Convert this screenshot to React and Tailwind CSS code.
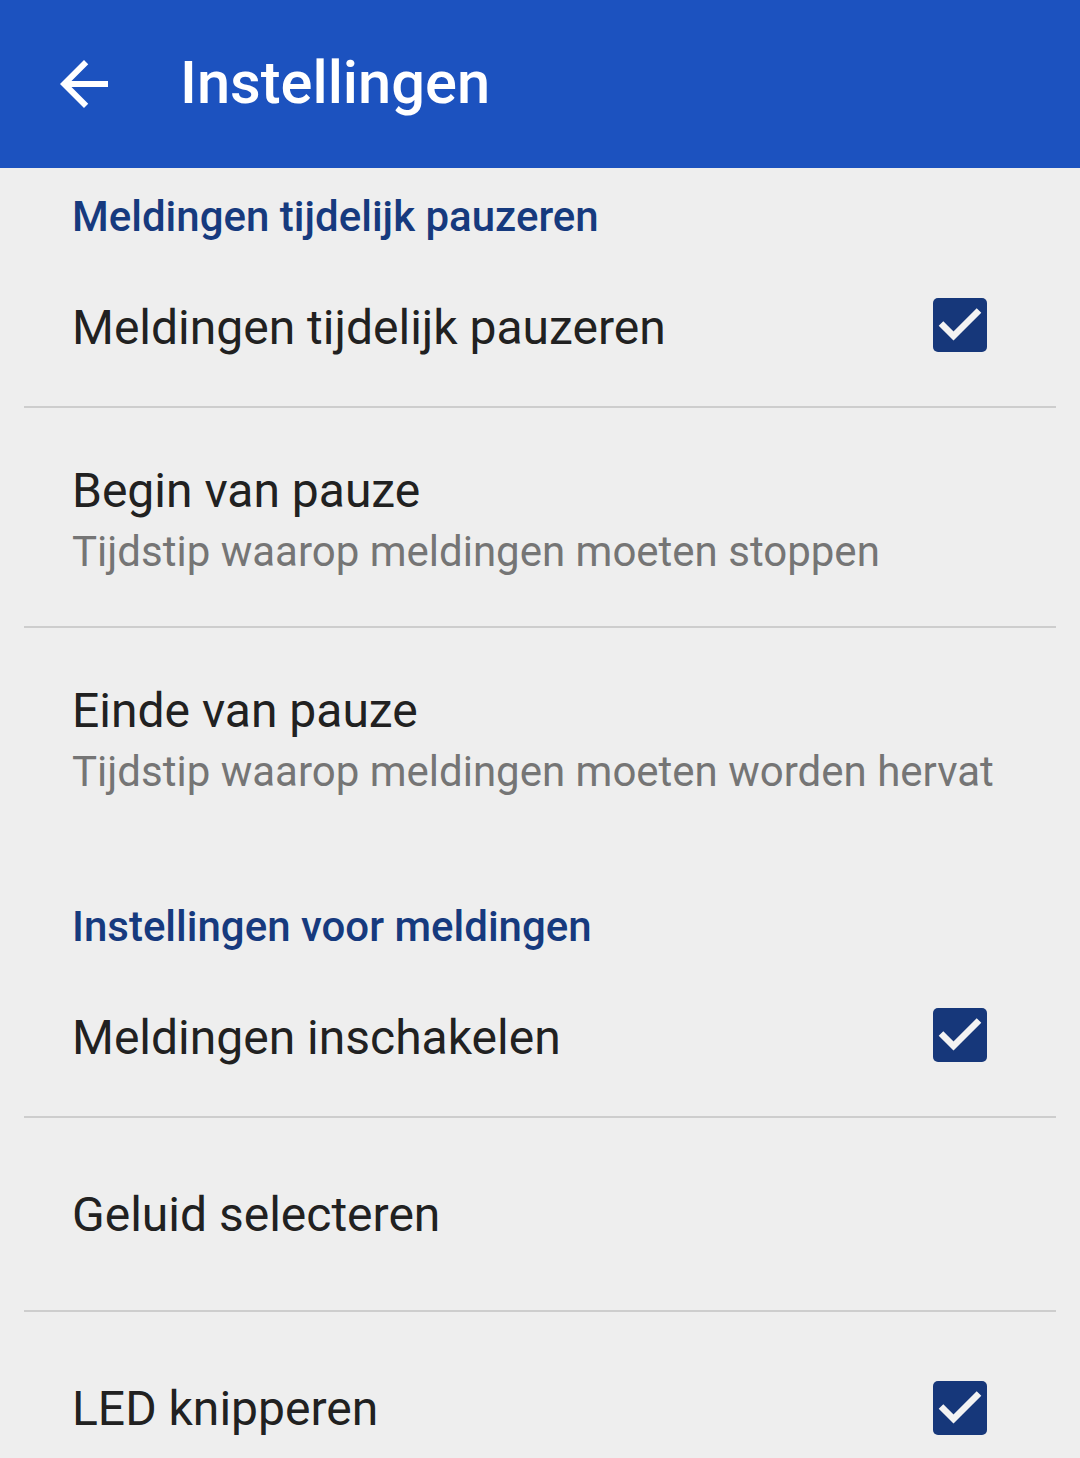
import React from "react";

function Check({ up }) {
  return (
    <div className={`w-[54px] h-[54px] rounded-[5px] bg-[#16377a] flex items-center justify-center shrink-0 ${up ? "mb-[4px]" : ""}`}>
      <svg width="54" height="54" viewBox="0 0 54 54">
        <path d="M8 25.5 L20.5 38 L46 12.5" fill="none" stroke="#f3f3f3" strokeWidth="6.5" strokeLinecap="butt" strokeLinejoin="miter" />
      </svg>
    </div>
  );
}

function Divider() {
  return <div className="mx-[24px] h-[2px] bg-[#cdcdcd]" />;
}

function Category({ children, extra }) {
  return (
    <div className={`${extra ? "h-[112px]" : "h-[80px]"} flex items-end pb-[6px] pl-[72px]`}>
      <span className="text-[42px] leading-[50px] font-medium text-[#163a7e] whitespace-nowrap">{children}</span>
    </div>
  );
}

function Row({ title, summary, checked, up, h }) {
  return (
    <div className={`${h} flex items-center pl-[72px] ${checked ? "pr-[93px]" : "pr-[24px]"}`}>
      <div className={`flex-1 flex flex-col ${summary ? "pt-[7px]" : ""}`}>
        <span className="text-[48px] leading-[61px] text-[#212121] whitespace-nowrap">{title}</span>
        {summary && <span className="text-[42px] leading-[61px] text-[#757575] whitespace-nowrap">{summary}</span>}
      </div>
      {checked && <Check up={up} />}
    </div>
  );
}

export default function App() {
  return (
    <div className="w-[1080px] h-[1458px] overflow-hidden bg-[#eeeeee]" style={{ fontFamily: "Roboto, sans-serif" }}>
      <div className="h-[168px] bg-[#1c52bf] flex items-center">
        <div className="w-[72px] h-[72px] ml-[48px] flex items-center justify-center">
          <svg width="72" height="72" viewBox="0 0 24 24" fill="#ffffff">
            <path d="M20 11H7.83l5.59-5.59L12 4l-8 8 8 8 1.41-1.41L7.83 13H20v-2z" />
          </svg>
        </div>
        <span className="ml-[60px] text-[59.6px] font-medium text-white leading-none">Instellingen</span>
      </div>
      <Category>Meldingen tijdelijk pauzeren</Category>
      <Row h="h-[158px]" title="Meldingen tijdelijk pauzeren" checked up />
      <Divider />
      <Row h="h-[218px]" title="Begin van pauze" summary="Tijdstip waarop meldingen moeten stoppen" />
      <Divider />
      <Row h="h-[218px]" title="Einde van pauze" summary="Tijdstip waarop meldingen moeten worden hervat" />
      <Category extra>Instellingen voor meldingen</Category>
      <Row h="h-[158px]" title="Meldingen inschakelen" checked up />
      <Divider />
      <Row h="h-[192px]" title="Geluid selecteren" />
      <Divider />
      <Row h="h-[192px]" title="LED knipperen" checked />
    </div>
  );
}
